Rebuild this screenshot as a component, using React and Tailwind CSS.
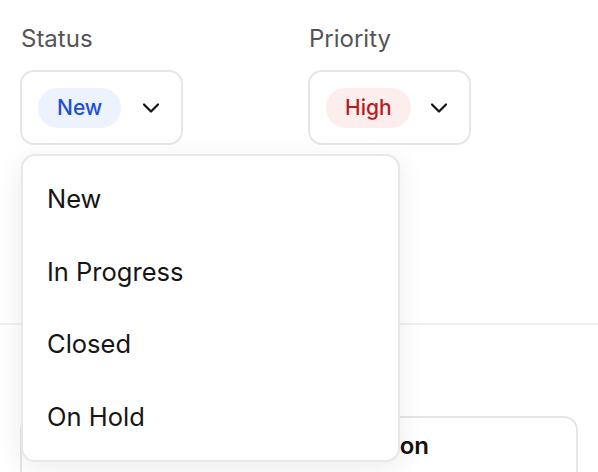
import React from "react";

function Chevron() {
  return (
    <svg width="18" height="12" viewBox="0 0 18 12" fill="none" className="shrink-0">
      <path d="M2 2.5l7 7 7-7" stroke="#111" strokeWidth="2.2" strokeLinecap="round" strokeLinejoin="round" />
    </svg>
  );
}

function SelectBox({ label, badge, badgeCls }) {
  return (
    <div className="flex flex-col">
      <div className="text-[24px] leading-[28px] text-[#555555] pl-px">{label}</div>
      <div className="mt-[17px] w-[163px] h-[75px] rounded-[14px] border-2 border-[#e6e6e6] bg-white flex items-center pl-[16px] pr-[21px]">
        <span className={"h-[40px] px-[19px] rounded-full flex items-center text-[21px] font-medium " + badgeCls}>{badge}</span>
        <div className="ml-auto"><Chevron /></div>
      </div>
    </div>
  );
}

export default function App() {
  const items = ["New", "In Progress", "Closed", "On Hold"];
  return (
    <div className="relative w-[598px] h-[472px] overflow-hidden bg-white font-['Inter',sans-serif]">
      <div className="flex gap-[125px] pl-[20px] pt-[25px]">
        <SelectBox label="Status" badge="New" badgeCls="bg-[#ecf3fe] text-[#1d4ed8]" />
        <SelectBox label="Priority" badge="High" badgeCls="bg-[#fdeeee] text-[#b91c1c]" />
      </div>
      <div className="mt-[178px] border-t-2 border-[#f0f0f0]"></div>
      <div className="mx-5 mt-[91px] h-[100px] rounded-[14px] border-2 border-[#e6e6e6] bg-white flex items-start pt-[12px]">
        <div className="w-[407px] text-right text-[24px] font-semibold text-[#111] leading-[32px]">Description</div>
      </div>
      <div className="absolute left-[21px] top-[154px] w-[379px] rounded-[14px] border-2 border-[#e8e8e8] bg-white shadow-[0_6px_28px_rgba(0,0,0,0.08)] py-[7px]">
        {items.map((t) => (
          <div key={t} className="h-[72.5px] flex items-center pl-[24px] text-[25.5px] text-[#161616]">{t}</div>
        ))}
      </div>
    </div>
  );
}
